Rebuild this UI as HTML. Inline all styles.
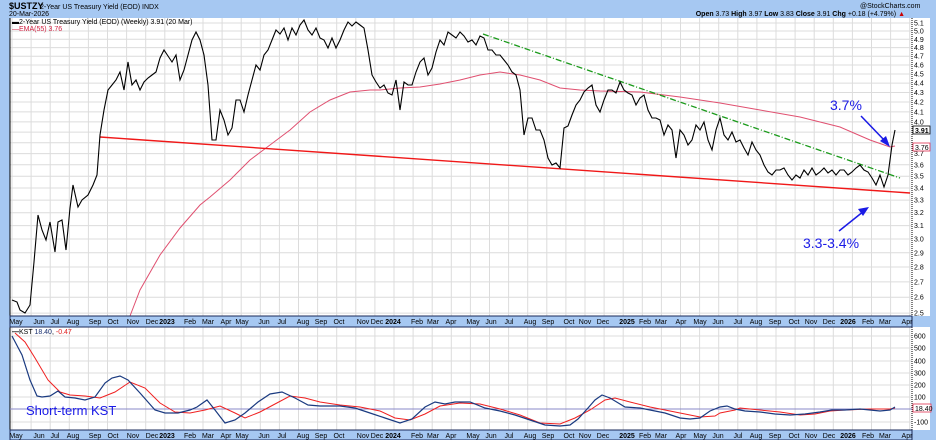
<!DOCTYPE html>
<html><head><meta charset="utf-8"><style>
html,body{margin:0;padding:0;width:936px;height:440px;overflow:hidden;background:#a6c8f2;}
svg{display:block;font-family:"Liberation Sans",sans-serif;}
</style></head><body>
<svg id="s" width="936" height="440" viewBox="0 0 936 440" xmlns="http://www.w3.org/2000/svg">
<rect x="0" y="0" width="936" height="440" fill="#a6c8f2"/>
<rect x="10" y="18" width="920" height="298" fill="#fff"/>
<rect x="10" y="327" width="920" height="103" fill="#fff"/>
<g id="grid" stroke="#dcdcdc" stroke-width="1"></g>
<line x1="912" y1="18" x2="912" y2="316" stroke="#000" stroke-dasharray="1,1"/>
<line x1="912" y1="327" x2="912" y2="430" stroke="#000" stroke-dasharray="1,1"/>
<line x1="10" y1="18" x2="10" y2="440" stroke="#000"/>
<g id="ylab" font-size="7" fill="#000"></g>
<!-- header -->
<text x="9" y="9" font-size="9" font-weight="bold">$USTZY</text>
<text x="40" y="9" font-size="7">2-Year US Treasury Yield (EOD) INDX</text>
<text x="9" y="16" font-size="7">20-Mar-2026</text>
<text x="860" y="8" font-size="7">@StockCharts.com</text>
<text x="905" y="16" font-size="7" text-anchor="end"><tspan font-weight="bold">Open</tspan> 3.73 <tspan font-weight="bold">High</tspan> 3.97 <tspan font-weight="bold">Low</tspan> 3.83 <tspan font-weight="bold">Close</tspan> 3.91 <tspan font-weight="bold">Chg</tspan> +0.18 (+4.79%) <tspan fill="#c00">▲</tspan></text>
<text x="12" y="24" font-size="7"><tspan font-weight="bold">▬</tspan>2-Year US Treasury Yield (EOD) (Weekly) 3.91 (20 Mar)</text>
<text x="12" y="31" font-size="7" fill="#d02040">—EMA(55) 3.76</text>
<!-- lines -->
<polyline id="ema" fill="none" stroke="#e05070" stroke-width="1" points="130,316 140,290 160,255 180,228 200,205 210,197 230,180 250,160 270,145 290,130 310,112 330,100 350,92 370,90 380,90 400,88 420,87 440,84 460,80 480,75 500,72 520,75 540,80 560,88 580,90 600,91 640,92 680,97 720,103 760,110 800,117 840,127 870,140 890,147 895,146"/>
<line x1="100" y1="137" x2="910" y2="193" stroke="#f01818" stroke-width="1.4"/>
<line x1="483" y1="34" x2="900" y2="178" stroke="#1a9a1a" stroke-width="1.3" stroke-dasharray="6,2,1,2"/>
<polyline fill="none" stroke="#000" stroke-width="1.1" points="12,300 17,302 20,310 25,313 30,305 34,262 38,215 42,230 46,240 50,222 55,252 58,222 62,220 66,250 70,208 73,185 78,207 82,200 88,195 93,185 97,175 100,135 104,110 108,90 112,85 116,80 120,72 124,90 128,62 132,85 136,80 140,90 144,82 148,78 152,75 156,72 160,58 164,50 168,56 172,62 176,55 180,80 184,70 188,55 192,40 196,32 200,40 204,55 208,85 212,140 216,140 220,110 224,120 228,135 232,128 236,100 240,100 244,112 248,95 252,80 256,65 260,70 264,55 268,50 272,40 276,30 280,34 284,28 288,40 292,28 296,35 300,25 304,20 308,30 312,35 316,28 320,38 324,40 328,48 332,38 336,48 340,40 344,30 348,22 352,26 356,22 360,25 364,28 368,50 372,75 376,82 380,88 384,85 388,93 392,95 396,80 400,110 404,82 408,85 412,85 416,72 420,62 424,58 428,75 432,68 436,52 440,40 444,45 448,32 452,35 456,38 460,32 464,36 468,42 472,40 476,45 480,36 484,38 488,50 492,50 496,55 500,55 504,60 508,65 512,72 516,75 520,90 524,135 528,118 532,118 536,130 540,130 544,140 548,158 552,165 556,163 560,168 564,128 568,126 572,115 576,105 580,100 584,92 588,88 592,85 596,105 600,112 604,100 608,90 612,90 616,93 620,82 624,90 628,93 632,95 636,105 640,98 644,95 648,110 652,118 656,118 660,120 664,135 668,125 672,130 676,158 680,130 684,135 688,145 692,140 696,125 700,130 704,122 708,140 712,150 716,130 720,118 724,135 728,140 732,132 736,142 740,140 744,148 748,155 752,142 756,150 760,155 764,165 768,172 772,175 776,170 780,170 784,168 788,175 792,180 796,175 800,178 804,170 808,175 812,168 816,175 820,172 824,168 828,173 832,170 836,175 840,170 844,170 848,175 852,172 856,168 860,165 864,170 868,172 872,178 876,185 880,175 884,187 888,175 892,145 895,130"/>
<!-- annotations -->
<text x="830" y="110" font-size="14" fill="#1a1ae6">3.7%</text>
<line x1="861" y1="116" x2="886" y2="142" stroke="#1a1ae6" stroke-width="1.5"/>
<polygon points="890,147 880,141 886,136" fill="#1a1ae6"/>
<text x="803" y="248" font-size="14" fill="#1a1ae6">3.3-3.4%</text>
<line x1="839" y1="231" x2="864" y2="211" stroke="#1a1ae6" stroke-width="1.5"/>
<polygon points="869,207 858,209 863,216" fill="#1a1ae6"/>
<!-- value boxes -->
<rect x="913" y="126" width="17" height="8" fill="#fff" stroke="#000" stroke-width="0.8"/>
<text x="915" y="133" font-size="7" font-weight="bold">3.91</text>
<rect x="913" y="143" width="17" height="8" fill="#fff" stroke="#e03050" stroke-width="0.8"/>
<text x="915" y="150" font-size="7" fill="#000">3.76</text>
<!-- KST panel -->
<line x1="10" y1="409" x2="912" y2="409" stroke="#8a88c8" stroke-width="1"/>
<text x="12" y="334" font-size="7"><tspan font-weight="bold">—</tspan>KST <tspan fill="#1a3070">18.40</tspan>, <tspan fill="#e02020">-0.47</tspan></text>
<text x="26" y="415" font-size="13" fill="#1a1ae6">Short-term KST</text>
<polyline fill="none" stroke="#f02020" stroke-width="1" points="15,333 25,342 35,358 48,380 60,392 70,395 85,396 100,398 115,392 130,382 145,388 160,403 175,412 190,413 205,410 220,406 235,413 245,418 260,412 275,404 290,396 305,398 320,402 340,405 360,407 380,411 395,418 410,420 425,414 440,406 460,403 480,404 500,409 520,415 540,423 560,424 575,418 590,410 605,400 615,398 630,402 650,407 680,413 700,417 715,416 720,413 735,410 740,408 760,410 780,412 800,415 815,414 830,411 845,410 870,409 890,409 895,408"/>
<polyline fill="none" stroke="#1a3a80" stroke-width="1.2" points="12,336 22,355 30,380 37,396 42,397 50,396 58,391 65,397 75,398 85,400 95,397 105,383 112,378 120,376 128,380 140,393 155,410 165,413 178,413 190,410 197,407 207,400 215,410 225,423 235,420 245,413 258,402 270,394 282,392 295,398 308,405 320,406 340,406 355,408 370,413 385,418 400,423 412,419 425,407 435,402 445,404 455,402 470,402 485,408 500,411 515,415 530,420 545,425 560,426 570,425 578,419 588,408 595,400 602,395 610,398 620,404 625,407 640,408 650,410 665,413 680,418 690,419 700,418 710,411 720,407 727,406 735,409 745,411 760,412 775,414 790,415 805,414 820,412 832,410 845,410 860,409 870,410 880,411 890,410 895,407"/>
<rect x="913" y="404" width="18" height="8" fill="#fff" stroke="#e03050" stroke-width="0.8"/>
<text x="915" y="411" font-size="7">18.40</text>
<!-- axis bands -->
<rect x="10" y="316" width="902" height="11" fill="#a6c8f2" stroke="#1a2a5a" stroke-width="1"/>
<rect x="10" y="430" width="902" height="10" fill="#a6c8f2" stroke="#1a2a5a" stroke-width="1"/>
<g id="mlab" font-size="7" fill="#000"></g>
</svg>
<script>
var NS="http://www.w3.org/2000/svg";
function el(p,t,a,txt){var e=document.createElementNS(NS,t);for(var k in a)e.setAttribute(k,a[k]);if(txt!==undefined)e.textContent=txt;document.getElementById(p).appendChild(e);return e;}
// vertical grid
for(var i=0;i<48;i++){var x=12+19.1*i;el("grid","line",{x1:x,y1:18,x2:x,y2:316});el("grid","line",{x1:x,y1:327,x2:x,y2:430});}
// main y labels
function yv(v){return 23+407*(Math.log(5.1)-Math.log(v));}
for(var v=51;v>=25;v--){var y=yv(v/10);el("grid","line",{x1:10,y1:y,x2:912,y2:y});
 if(v!=39&&v!=38) el("ylab","text",{x:914,y:y+2.5},(v/10).toFixed(1));}
// kst
var kl=[[600,336],[500,348],[400,361],[300,373],[200,385],[100,397],[-100,422]];
kl.forEach(function(k){el("grid","line",{x1:10,y1:k[1],x2:912,y2:k[1]});el("ylab","text",{x:914,y:k[1]+2.5},k[0]==-100?"-100":String(k[0]));});
// month labels
var m=[["May",16],["Jun",39],["Jul",55],["Aug",73],["Sep",95],["Oct",113],["Nov",133],["Dec",152],["2023",167],["Feb",190],["Mar",208],["Apr",226],["May",242],["Jun",264],["Jul",282],["Aug",303],["Sep",321],["Oct",339],["Nov",363],["Dec",377],["2024",393],["Feb",417],["Mar",433],["Apr",451],["May",473],["Jun",491],["Jul",509],["Aug",530],["Sep",548],["Oct",569],["Nov",585],["Dec",603],["2025",627],["Feb",645],["Mar",661],["Apr",681],["May",700],["Jun",718],["Jul",738],["Aug",756],["Sep",775],["Oct",794],["Nov",811],["Dec",829],["2026",848],["Feb",868],["Mar",885],["Apr",907]];
m.forEach(function(a){var b=a[0].length==4?{"font-weight":"bold"}:{};
 var o={x:a[1],y:324,"text-anchor":"middle"};for(var k in b)o[k]=b[k];el("mlab","text",o,a[0]);
 var o2={x:a[1],y:438,"text-anchor":"middle"};for(var k in b)o2[k]=b[k];el("mlab","text",o2,a[0]);});
</script>
</body></html>
